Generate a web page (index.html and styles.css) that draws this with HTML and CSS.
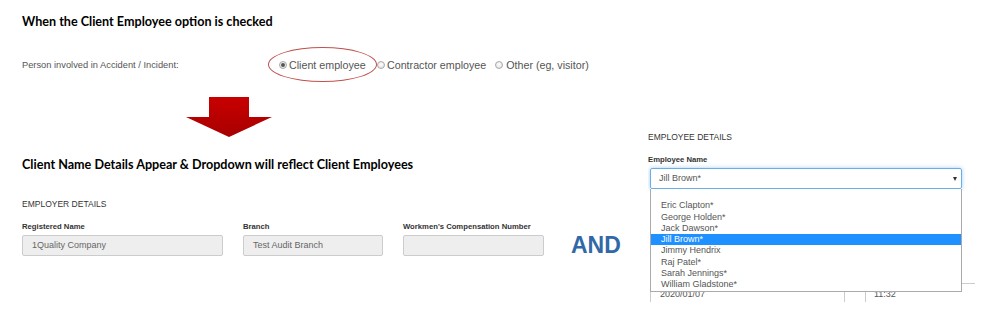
FILE: index.html
```html
<!DOCTYPE html>
<html>
<head>
<meta charset="utf-8">
<link rel="stylesheet" href="styles.css">
</head>
<body>
<div class="page">
  <div class="left">
    <h1 class="title t1">When the Client Employee option is checked</h1>
    <div class="radio-row">
      <span class="question">Person involved in Accident / Incident:</span>
      <div class="options">
        <span class="opt circled"><span class="radio checked"></span>Client employee</span>
        <span class="opt opt2"><span class="radio"></span>Contractor employee</span>
        <span class="opt opt3"><span class="radio"></span>Other (eg, visitor)</span>
      </div>
    </div>
    <svg class="arrow" width="86" height="40" viewBox="0 0 86 40">
      <defs>
        <linearGradient id="ag" x1="0" y1="0" x2="0" y2="1">
          <stop offset="0" stop-color="#c80000"/>
          <stop offset="1" stop-color="#a80000"/>
        </linearGradient>
      </defs>
      <path d="M23 0 H63 V20 H86 L43 40 L0 20 H23 Z" fill="url(#ag)"/>
    </svg>
    <h2 class="title t2">Client Name Details Appear &amp; Dropdown will reflect Client Employees</h2>
    <div class="section-head">EMPLOYER DETAILS</div>
    <div class="fields">
      <div class="field f1">
        <div class="label">Registered Name</div>
        <div class="input">1Quality Company</div>
      </div>
      <div class="field f2">
        <div class="label">Branch</div>
        <div class="input">Test Audit Branch</div>
      </div>
      <div class="field f3">
        <div class="label">Workmen's Compensation Number</div>
        <div class="input"></div>
      </div>
      <div class="and">AND</div>
    </div>
  </div>
  <div class="right">
    <div class="section-head">EMPLOYEE DETAILS</div>
    <div class="label emp-label">Employee Name</div>
    <div class="select-wrap">
      <div class="select">Jill Brown*<span class="caret"></span></div>
      <ul class="list">
        <li class="blank">&nbsp;</li>
        <li>Eric Clapton*</li>
        <li>George Holden*</li>
        <li>Jack Dawson*</li>
        <li class="sel">Jill Brown*</li>
        <li>Jimmy Hendrix</li>
        <li>Raj Patel*</li>
        <li>Sarah Jennings*</li>
        <li>William Gladstone*</li>
      </ul>
    </div>
    <div class="date-row">
      <div class="dinput date">2020/01/07</div>
      <div class="dinput time">11:32</div>
    </div>
  </div>
</div>
</body>
</html>
```

FILE: styles.css
```css
html, body {
  margin: 0;
  padding: 0;
  background: #fff;
}
.page {
  display: flex;
  width: 995px;
  height: 328px;
  font-family: "Liberation Sans", Arial, sans-serif;
  color: #555;
}
.left {
  width: 626px;
  padding-left: 22px;
  padding-top: 14px;
  display: flex;
  flex-direction: column;
  align-items: flex-start;
}
.title {
  margin: 0;
  font-family: Lato, "Open Sans", sans-serif;
  font-weight: 700;
  font-size: 12.6px;
  line-height: 16px;
  color: #000;
  white-space: nowrap;
}
.radio-row {
  margin-top: 17px;
  height: 35px;
  display: flex;
  align-items: center;
}
.question {
  width: 246px;
  font-size: 9.3px;
  color: #555;
}
.options {
  display: flex;
  align-items: center;
  font-size: 10.7px;
  color: #555;
}
.opt {
  display: inline-flex;
  align-items: center;
  white-space: nowrap;
}
.circled {
  width: 109px;
  height: 35px;
  box-sizing: border-box;
  border: 1px solid #c0504d;
  border-radius: 50%;
  padding-left: 10px;
}
.radio {
  position: relative;
  width: 8px;
  height: 8px;
  box-sizing: border-box;
  border-radius: 50%;
  border: 1px solid #a9a9a9;
  background: radial-gradient(circle at 50% 40%, #fff, #dcdcdc);
  margin-right: 2px;
}
.radio.checked::after {
  content: "";
  position: absolute;
  left: 1px;
  top: 1px;
  width: 4px;
  height: 4px;
  border-radius: 50%;
  background: #555;
}
.opt2 {
  margin-left: 0;
}
.opt3 {
  margin-left: 9px;
}
.opt3 .radio {
  margin-right: 3px;
}
.arrow {
  display: block;
  margin-top: 15px;
  margin-left: 164px;
}
.t2 {
  margin-top: 20px;
}
.section-head {
  font-size: 8.5px;
  line-height: 10px;
  color: #333;
  white-space: nowrap;
}
.left .section-head {
  margin-top: 26px;
}
.fields {
  display: flex;
  align-items: flex-end;
  margin-top: 13px;
}
.field {
  display: flex;
  flex-direction: column;
}
.label {
  font-size: 7.7px;
  line-height: 10px;
  font-weight: 700;
  color: #333;
  white-space: nowrap;
}
.input {
  margin-top: 3px;
  height: 21px;
  box-sizing: border-box;
  border: 1px solid #ccc;
  border-radius: 2px;
  background: #eee;
  font-size: 9px;
  line-height: 19px;
  padding-left: 9px;
  color: #666;
}
.f1 { width: 201px; }
.f2 { width: 140px; margin-left: 20px; }
.f3 { width: 141px; margin-left: 20px; }
.and {
  margin-left: 27px;
  font-size: 23px;
  font-weight: 700;
  line-height: 21px;
  color: #3168a8;
  height: 21px;
}
.right {
  width: 327px;
  height: 302px;
  overflow: hidden;
  padding-top: 132px;
  box-sizing: border-box;
  display: flex;
  flex-direction: column;
}
.emp-label {
  margin-top: 13px;
}
.select-wrap {
  position: relative;
  margin-top: 3px;
  margin-left: 2px;
  width: 312px;
}
.select {
  height: 21px;
  box-sizing: border-box;
  border: 1px solid #66afe9;
  border-radius: 2px;
  box-shadow: 0 0 4px rgba(102, 175, 233, 0.6);
  font-size: 9px;
  line-height: 19px;
  padding-left: 8px;
  color: #555;
  display: flex;
  align-items: center;
}
.caret {
  margin-left: auto;
  margin-right: 4px;
  width: 0;
  height: 0;
  border-left: 2.5px solid transparent;
  border-right: 2.5px solid transparent;
  border-top: 4px solid #333;
}
.list {
  position: absolute;
  left: 0;
  top: 21px;
  width: 312px;
  margin: 0;
  padding: 0;
  list-style: none;
  box-sizing: border-box;
  border: 1px solid #aaa;
  border-top: 0;
  background: #fff;
  z-index: 2;
}
.list li {
  height: 11.3px;
  line-height: 11.3px;
  font-size: 9px;
  padding-left: 10px;
  color: #555;
  white-space: nowrap;
}
.list li.sel {
  background: #1e90ff;
  color: #fff;
}
.date-row {
  display: flex;
  margin-top: 94px;
  margin-left: 2px;
}
.dinput {
  height: 24px;
  box-sizing: border-box;
  border: 1px solid #ccc;
  font-size: 9px;
  line-height: 20px;
  padding-left: 9px;
  color: #555;
  flex-shrink: 0;
}
.date { width: 195px; }
.time { width: 150px; margin-left: 20px; padding-left: 8px; }
```
